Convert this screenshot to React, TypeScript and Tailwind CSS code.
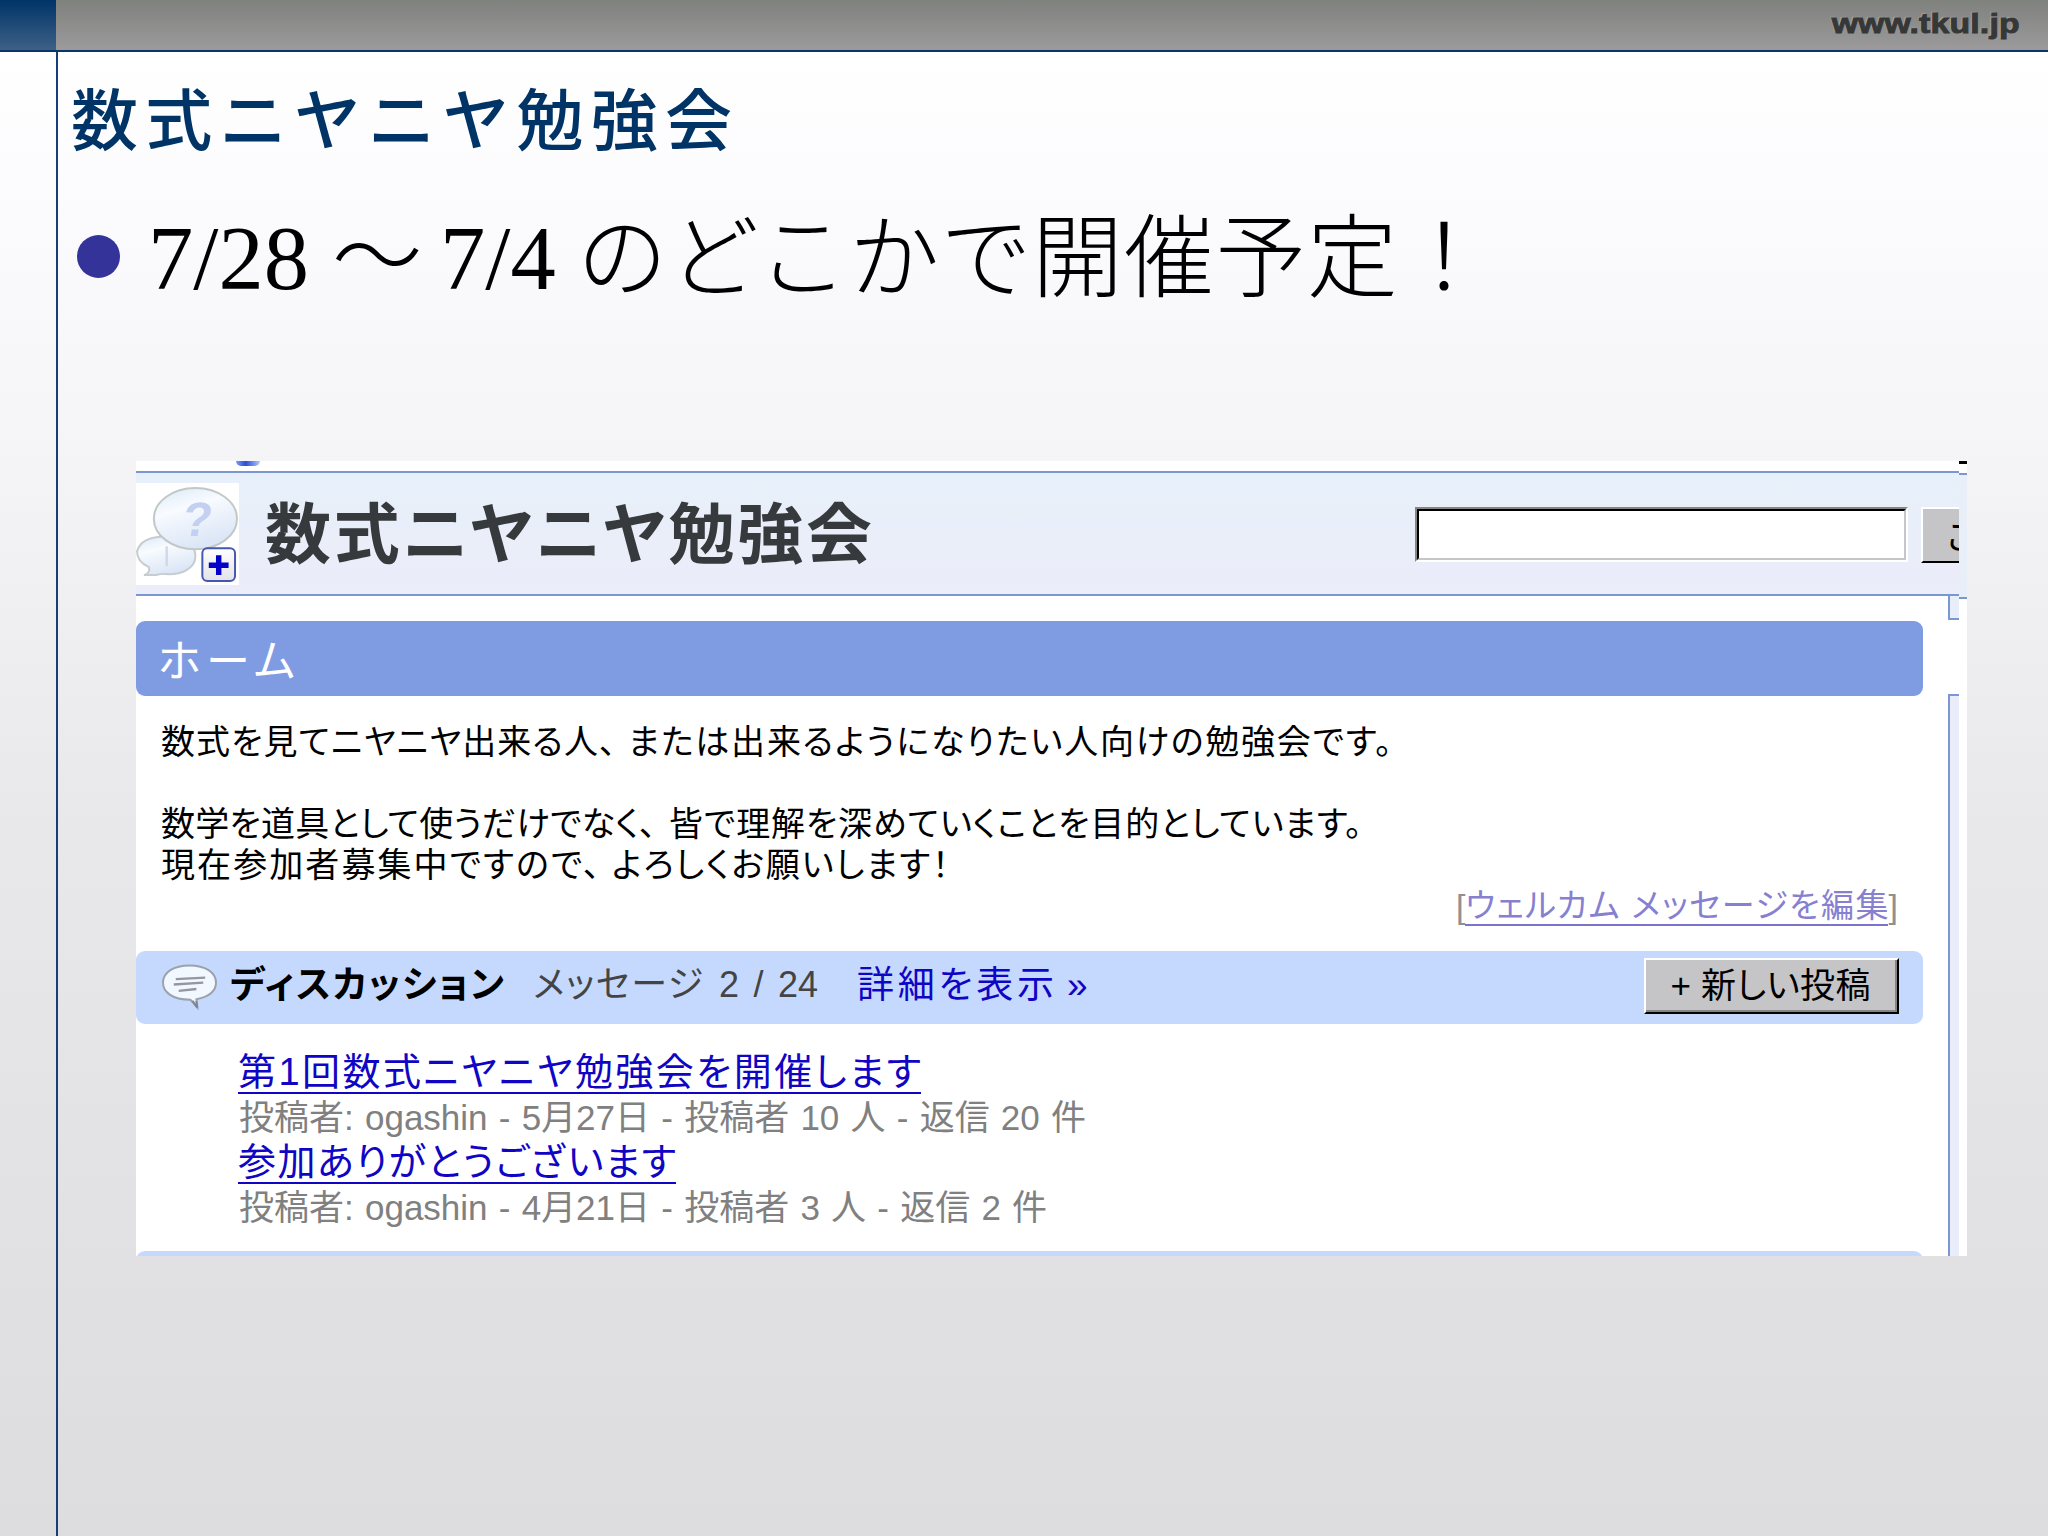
import React from 'react';

function Line({ className, children }: { className: string; children: React.ReactNode }) {
  return <div className={'whitespace-nowrap [text-align-last:justify] ' + className}>{children}</div>;
}

function GroupIcon() {
  return (
    <svg width="103" height="102" viewBox="0 0 104 103" className="block">
      <defs>
        <linearGradient id="bub" x1="0" y1="0" x2="0.4" y2="1">
          <stop offset="0" stopColor="#d9e9f8" />
          <stop offset="0.4" stopColor="#f8fbff" />
          <stop offset="1" stopColor="#dbe6f6" />
        </linearGradient>
        <linearGradient id="plus" x1="0" y1="0" x2="0" y2="1">
          <stop offset="0" stopColor="#ffffff" />
          <stop offset="1" stopColor="#e2e2e8" />
        </linearGradient>
      </defs>
      <rect width="104" height="103" fill="#fff" />
      <path d="M8 93 C13 92 14 88 13 85 C4 81 1 76 1 69 C4 58 16 54 30 54 C48 54 60 62 60 74 C60 86 46 93 30 92 C24 91 22 93 19 93 Z" fill="url(#bub)" stroke="#c6ccd0" strokeWidth="2" />
      <path d="M31 64 V84" stroke="#cfd9e8" strokeWidth="2.500" />
      <ellipse cx="60" cy="36" rx="42" ry="31" fill="url(#bub)" stroke="#c2c8c8" strokeWidth="2" />
      <text x="0" y="0" textAnchor="middle" fontFamily="Liberation Sans" fontWeight="700" fontSize="49" fill="#c3d0f1" transform="translate(60 54) skewX(-8)">?</text>
      <rect x="67" y="66" width="33" height="33" rx="5" fill="url(#plus)" stroke="#4557b0" strokeWidth="2" />
      <path d="M83.500 73 V93 M73.500 83 H93.500" stroke="#0500c8" strokeWidth="5.500" />
    </svg>
  );
}

function TalkIcon() {
  return (
    <svg width="55" height="46" viewBox="0 0 56 46" className="block">
      <path d="M36 44 L29 36 C10 36 1 28 1 18.500 C1 8 12 1 28 1 C44 1 55 8 55 18.500 C55 27 48 33 35 35.500 Z" fill="#f2f8ff" stroke="#9aa2ac" strokeWidth="2" />
      <path d="M31 37 L36 44 L35 37" fill="#dfe8f4" stroke="#7d8590" strokeWidth="2" />
      <path d="M14 15 L44 13.500 M12 20.500 L42 18.500 M17 27 L35 25" stroke="#9496a0" strokeWidth="2.400" />
    </svg>
  );
}

function Meta({ children }: { children: React.ReactNode }) {
  return <div className="flex h-[45px] items-center pt-px pl-px text-[35px] whitespace-nowrap text-[#808080] [word-spacing:1.5px]">{children}</div>;
}

function Screenshot() {
  return (
    <div className="relative ml-[136px] h-[795px] w-[1831px] overflow-hidden bg-white font-['Liberation_Sans','Noto_Sans_CJK_JP',sans-serif] [font-feature-settings:'palt']">
      <div className="h-[10px]">
        <div className="ml-[100px] h-[5px] w-[24px] rounded-b-full bg-[linear-gradient(90deg,#7f9cf0,#2a4fd6_40%,#b9c8ee)]" />
      </div>
      <div className="flex h-[125px] w-[1823px] items-start border-y-2 border-[#7b97d2] bg-[linear-gradient(#e7f0fa,#ebedf9)]">
        <div className="mt-[10px] w-[104px]">
          <GroupIcon />
        </div>
        <Line className="mt-[12px] ml-[25px] h-[100px] w-[607px] text-[66px] leading-[100px] font-bold text-[#363a3d]">数式ニヤニヤ勉強会</Line>
        <div className="mt-[34px] ml-[543px] h-[55px] w-[493px] border-2 border-t-[#858585] border-r-white border-b-white border-l-[#858585]">
          <div className="h-full w-full border-2 border-t-black border-r-[#c6c6c8] border-b-[#c6c6c8] border-l-black bg-white" />
        </div>
        <div className="mt-[34px] ml-[13px] h-[56px] w-[38px] overflow-hidden border-t-2 border-b-2 border-l-2 border-t-white border-b-black border-l-white bg-[#c5c5c7] pl-[24px] text-[35px] leading-[58px] text-black">こ</div>
      </div>
      <div className="flex h-[660px]">
        <div className="w-[1812px] shrink-0 pt-[25px]">
          <div className="h-[75px] w-[1787px] rounded-[9px] bg-[#7f9ce3] pl-[22px]">
            <Line className="w-[137px] text-[44px] leading-[81px] text-white">ホーム</Line>
          </div>
          <div className="ml-[25px] pt-[26px] text-[34px] leading-[41px] text-black">
            <div className="flex">
              <Line className="w-[455px]">数式を見てニヤニヤ出来る人、</Line>
              <Line className="ml-[12px] w-[764px]">または出来るようになりたい人向けの勉強会です。</Line>
            </div>
            <div className="h-[41px]" />
            <div className="flex">
              <Line className="w-[495px]">数学を道具として使うだけでなく、</Line>
              <Line className="ml-[13px] w-[693px]">皆で理解を深めていくことを目的としています。</Line>
            </div>
            <div className="flex">
              <Line className="w-[439px]">現在参加者募集中ですので、</Line>
              <Line className="ml-[12px] w-[337px]">よろしくお願いします！</Line>
            </div>
          </div>
          <div className="flex h-[41px] items-center pl-[1320px] text-[34px] text-[#909090]">
            [<Line className="w-[423px] border-b-2 border-[#7a74cc] text-[33px] leading-[37px] text-[#8780d0]">ウェルカム メッセージを編集</Line>]
          </div>
          <div className="mt-[24px] flex h-[73px] w-[1787px] items-center rounded-[9px] bg-[#c5d9ff]">
            <div className="-mt-[2px] ml-[26px]">
              <TalkIcon />
            </div>
            <div className="-mt-[4px] flex">
              <Line className="ml-[13px] w-[274px] text-[37px] font-bold text-black">ディスカッション</Line>
              <Line className="ml-[29px] w-[170px] text-[36px] text-[#444]">メッセージ</Line>
              <Line className="ml-[16px] w-[99px] text-[36px] text-[#444]">2 / 24</Line>
              <div className="ml-[39px] flex text-[37px] text-[#1005c4]">
                <Line className="w-[197px]">詳細を表示</Line>
                <span className="ml-[13px]">»</span>
              </div>
            </div>
            <div className="-mt-[4px] mr-[24px] ml-auto flex h-[56px] w-[255px] items-center border-2 border-t-white border-r-black border-b-black border-l-white bg-[#c5c5c7]">
              <div className="flex h-full w-full items-center justify-center border-r-2 border-b-2 border-[#858585] pt-[3px]">
                <Line className="w-[200px] text-[35px] text-black">+ 新しい投稿</Line>
              </div>
            </div>
          </div>
          <div className="pt-[26px] pl-[102px]">
            <Line className="mb-px h-[44px] w-[683px] border-b-2 border-[#1005c4] text-[38px] leading-[44px] text-[#1005c4]">第1回数式ニヤニヤ勉強会を開催します</Line>
            <Meta>投稿者: ogashin - 5月27日 - 投稿者 10 人 - 返信 20 件</Meta>
            <Line className="mb-px h-[44px] w-[438px] border-b-2 border-[#1005c4] text-[38px] leading-[44px] text-[#1005c4]">参加ありがとうございます</Line>
            <Meta>投稿者: ogashin - 4月21日 - 投稿者 3 人 - 返信 2 件</Meta>
          </div>
          <div className="mt-[21px] h-[40px] w-[1787px] rounded-[9px] bg-[#c5d9ff]" />
        </div>
        <div className="-mt-[2px] flex w-[11px] shrink-0 flex-col justify-between">
          <div className="h-[26px] border-2 border-r-0 border-[#7b97d2] bg-[#e8eef9]" />
          <div className="h-[562px] border-t-2 border-l-2 border-[#7b97d2] bg-[#e9edf9]" />
        </div>
      </div>
      <div className="absolute top-0 right-0 h-[138px] w-[8px] bg-white">
        <div className="h-[3px] bg-black" />
        <div className="mt-[9px] h-[126px] border-y-2 border-[#7b97d2] bg-[#e9eff9]" />
      </div>
    </div>
  );
}

export default function App() {
  return (
    <div className="flex h-[1536px] w-[2048px] flex-col overflow-hidden bg-[linear-gradient(#ffffff_4%,#fbfafd_14%,#f5f4f7_29%,#e9e9eb_52%,#e1e1e3_82%,#dddde0)]">
      <div className="flex h-[52px] shrink-0 border-b-2 border-[#0a3568]">
        <div className="w-[56px] bg-[linear-gradient(#003468,#3e6086)]" />
        <div className="flex flex-1 items-center justify-end bg-[linear-gradient(#7f817d,#9c9a9c)] pr-[28px]">
          <div className="-mt-[2px] origin-right scale-x-[1.2] font-['Liberation_Sans',sans-serif] text-[28px] leading-[46px] font-bold tracking-[0.2px] whitespace-nowrap text-[#363838] [-webkit-text-stroke:1px_#363838] [text-shadow:-1px_-1px_1px_#b0b0b0]">www.tkul.jp</div>
        </div>
      </div>
      <div className="flex flex-1">
        <div className="w-[58px] shrink-0 border-r-2 border-[#163f78]" />
        <div className="-ml-[58px] flex flex-col">
          <Line className="mt-[14px] ml-[71px] h-[102px] w-[661px] font-['Noto_Sans_CJK_JP',sans-serif] text-[67px] leading-[100px] font-medium text-[#003366]">数式ニヤニヤ勉強会</Line>
          <div className="mt-[32px] flex h-[112px] items-center">
            <div className="ml-[77px] size-[43px] rounded-full bg-[#333399]" />
            <div className="mt-[6px] ml-[28px] flex items-baseline font-['Liberation_Serif','Noto_Sans_CJK_JP',serif] text-[90.500px] leading-[112px] font-light whitespace-nowrap text-black">
              <span className="w-[184px]">7/28</span>
              <span className="w-[108px]">～</span>
              <span className="w-[137px]">7/4</span>
              <span className="relative top-[1px] tracking-[1.1px]">のどこかで開催予定！</span>
            </div>
          </div>
          <div className="mt-[149px]">
            <Screenshot />
          </div>
        </div>
      </div>
    </div>
  );
}
